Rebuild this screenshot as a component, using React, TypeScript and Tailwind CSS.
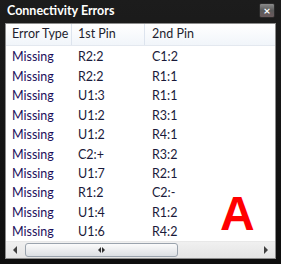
const ROWS = [
  ['Missing', 'R2:2', 'C1:2'],
  ['Missing', 'R2:2', 'R1:1'],
  ['Missing', 'U1:3', 'R1:1'],
  ['Missing', 'U1:2', 'R3:1'],
  ['Missing', 'U1:2', 'R4:1'],
  ['Missing', 'C2:+', 'R3:2'],
  ['Missing', 'U1:7', 'R2:1'],
  ['Missing', 'R1:2', 'C2:-'],
  ['Missing', 'U1:4', 'R1:2'],
  ['Missing', 'U1:6', 'R4:2'],
]

export default function App() {
  return (
    <div
      className="w-[281px] h-[264px] bg-gradient-to-b from-[#1c1c1c] to-[#0e0e0e] flex flex-col overflow-hidden"
      style={{ fontFamily: 'Lato, "Noto Sans", sans-serif' }}
    >
      {/* title bar */}
      <div className="h-[23px] flex items-center justify-between pl-[7px] pr-[6px] shrink-0">
        <span className="text-white text-[12.5px] font-bold leading-none">
          Connectivity Errors
        </span>
        <button
          type="button"
          className="w-[16px] h-[15px] mt-[-2px] rounded-[2px] border border-[#2a2a2a] bg-gradient-to-b from-[#8a8a8a] via-[#5a5a5a] to-[#6a5a5c] flex items-center justify-center text-white text-[12px] font-bold leading-none"
        >
          ×
        </button>
      </div>

      {/* content */}
      <div className="mx-[5px] mb-[5px] flex-1 flex flex-col bg-white border border-[#8c8c8c] overflow-hidden">
        <div className="h-[22px] shrink-0 flex bg-gradient-to-b from-[#ffffff] to-[#f1f5fa] border-b border-[#e3e8ef] text-[12.5px] text-[#1e1e2e]">
          <div className="w-[66px] pl-[6px] flex items-center border-r border-[#dde4ee]">Error Type</div>
          <div className="w-[73px] pl-[6px] flex items-center border-r border-[#dde4ee]">1st Pin</div>
          <div className="flex-1 pl-[7px] flex items-center">2nd Pin</div>
        </div>

        <div className="relative flex-1 overflow-hidden pt-[2px]">
          {ROWS.map((r, i) => (
            <div key={i} className="h-[19.45px] flex items-center text-[12.5px]">
              <div className="w-[66px] pl-[6px] text-[#1c0f5c]">{r[0]}</div>
              <div className="w-[73px] pl-[6px] text-[#1a1a3a]">{r[1]}</div>
              <div className="flex-1 pl-[7px] text-[#1a1a3a]">{r[2]}</div>
            </div>
          ))}
          <span
            className="absolute left-[214px] top-[144px] text-[#ff0000] text-[48px] font-bold leading-none"
            style={{ fontFamily: '"Liberation Sans", Arial, sans-serif' }}
          >
            A
          </span>
        </div>

        {/* horizontal scrollbar */}
        <div className="h-[17px] shrink-0 flex items-center bg-gradient-to-b from-[#f0f0f0] to-[#e4e4e4] border-t border-[#e8e8e8]">
          <div className="w-[18px] flex items-center justify-center">
            <div className="w-0 h-0 border-y-[4px] border-y-transparent border-r-[4px] border-r-[#404040]" />
          </div>
          <div className="ml-[1px] w-[153px] h-[14px] rounded-[3px] border border-[#9aa3ad] bg-gradient-to-b from-[#fbfbfb] to-[#dcdfe3] flex items-center justify-center">
            <div className="flex gap-[1px]">
              <div className="w-0 h-0 border-y-[3.5px] border-y-transparent border-r-[3.5px] border-r-[#303030]" />
              <div className="w-0 h-0 border-y-[3.5px] border-y-transparent border-l-[3.5px] border-l-[#303030]" />
            </div>
          </div>
          <div className="flex-1" />
          <div className="w-[18px] flex items-center justify-center">
            <div className="w-0 h-0 border-y-[4px] border-y-transparent border-l-[4px] border-l-[#404040]" />
          </div>
        </div>
      </div>
    </div>
  )
}
